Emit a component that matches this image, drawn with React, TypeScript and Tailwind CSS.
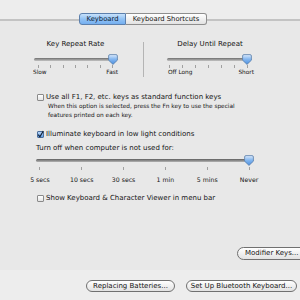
import React from "react";

function Thumb({ className }: { className: string }) {
  return (
    <svg width="10" height="11" viewBox="0 0 10 11" className={className}>
      <defs>
        <linearGradient id="thumbgrad" x1="0" y1="0" x2="0" y2="1">
          <stop offset="0" stopColor="#dceafb" />
          <stop offset="0.45" stopColor="#86b8f0" />
          <stop offset="1" stopColor="#4b8fe0" />
        </linearGradient>
      </defs>
      <path
        d="M0.6 2 Q0.6 0.6 2 0.6 H8 Q9.4 0.6 9.4 2 V6.2 L5 10.4 L0.6 6.2 Z"
        fill="url(#thumbgrad)"
        stroke="#5b7fa9"
        strokeWidth="0.8"
      />
    </svg>
  );
}

function Tick() {
  return <div className="w-px h-[3px] bg-[#a0a0a0]" />;
}

function Checkbox({ checked }: { checked?: boolean }) {
  if (checked) {
    return (
      <div className="w-[7px] h-[7px] shrink-0 rounded-[1px] border border-[#4c6f9c] bg-linear-to-b from-[#b9d6f7] to-[#5e9ee8] relative">
        <svg width="7" height="8" viewBox="0 0 7 8" className="absolute -top-[2px] -left-px">
          <path d="M1.2 4.6 L2.9 6.8 L6.3 1" fill="none" stroke="#132036" strokeWidth="1.2" />
        </svg>
      </div>
    );
  }
  return (
    <div className="w-[7px] h-[7px] shrink-0 rounded-[1px] border border-[#8a8a8a] bg-linear-to-b from-white to-[#e4e4e4]" />
  );
}

export default function App() {
  return (
    <div className="w-[300px] h-[300px] overflow-hidden bg-[#ededed] font-['DejaVu_Sans',sans-serif] text-[#141414] flex flex-col">
      <div className="h-[19px] shrink-0" />
      <div className="h-[251px] shrink-0 border-t-2 border-[#c3c3c3] bg-[#e8e8e8] flex flex-col">
        {/* Tabs */}
        <div className="-mt-[8px] ml-[79px] flex h-[12px] text-[6.8px] leading-none">
          <div className="w-[47px] h-full rounded-l-[3px] border border-[#5c80ad] bg-linear-to-b from-[#c8e2fb] via-[#92c2f4] to-[#74aff0] flex items-center justify-center text-[#0c1a30]">
            Keyboard
          </div>
          <div className="w-[81px] h-full rounded-r-[3px] border border-l-0 border-[#8e8e8e] bg-linear-to-b from-white to-[#e2e2e2] flex items-center justify-center">
            Keyboard Shortcuts
          </div>
        </div>

        {/* Sliders */}
        <div className="mt-[15px] flex h-[37px]">
          <div className="ml-[33px] w-[85px] flex flex-col">
            <div className="h-[9px] leading-[9px] text-[7px] text-center">Key Repeat Rate</div>
            <div className="mt-[4px] relative h-[12px]">
              <div className="mt-[5px] ml-[1px] w-[83px] h-[3px] rounded-full bg-linear-to-b from-[#6f6f6f] to-[#c4c4c4]" />
              <Thumb className="absolute top-[1px] left-[75px]" />
            </div>
            <div className="flex justify-between pl-[5px] pr-[5px]">
              {[0, 1, 2, 3, 4, 5, 6].map((i) => (
                <Tick key={i} />
              ))}
            </div>
            <div className="mt-px flex justify-between text-[5.8px] leading-[7px]">
              <span>Slow</span>
              <span>Fast</span>
            </div>
          </div>
          <div className="ml-[25px] mt-[2px] w-px h-[35px] bg-[#b4b4b4]" />
          <div className="ml-[22px] w-[88px] flex flex-col">
            <div className="h-[9px] leading-[9px] text-[7px] text-center">Delay Until Repeat</div>
            <div className="mt-[4px] relative h-[12px]">
              <div className="mt-[5px] ml-[1px] w-[84px] h-[3px] rounded-full bg-linear-to-b from-[#6f6f6f] to-[#c4c4c4]" />
              <Thumb className="absolute top-[1px] left-[76px]" />
            </div>
            <div className="flex justify-between pl-[3px] pr-[6px]">
              {[0, 1, 2, 3, 4, 5, 6].map((i) => (
                <Tick key={i} />
              ))}
            </div>
            <div className="mt-px flex justify-between pl-[2px] text-[5.8px] leading-[7px]">
              <span>Off Long</span>
              <span>Short</span>
            </div>
          </div>
        </div>

        {/* Checkbox 1 */}
        <div className="mt-[16px] ml-[37px] flex items-center gap-[2px] h-[9px] text-[7px] leading-[9px]">
          <Checkbox />
          <span>Use all F1, F2, etc. keys as standard function keys</span>
        </div>
        <div className="ml-[48px] text-[5.8px] leading-[9px]">
          <div>When this option is selected, press the Fn key to use the special</div>
          <div>features printed on each key.</div>
        </div>

        {/* Checkbox 2 */}
        <div className="mt-[10px] ml-[37px] flex items-center gap-[2px] h-[9px] text-[7px] leading-[9px]">
          <Checkbox checked />
          <span>Illuminate keyboard in low light conditions</span>
        </div>
        <div className="mt-[5px] ml-[36px] h-[9px] text-[7px] leading-[9px]">
          Turn off when computer is not used for:
        </div>

        {/* Slider 3 */}
        <div className="ml-[19px] w-[251px] flex flex-col">
          <div className="mt-px relative h-[12px]">
            <div className="mt-[5px] ml-[17px] w-[216px] h-[3px] rounded-full bg-linear-to-b from-[#5f5f5f] to-[#b4b4b4]" />
            <Thumb className="absolute top-[1px] left-[225px]" />
          </div>
          <div className="mt-px grid grid-cols-6">
            {[0, 1, 2, 3, 4, 5].map((i) => (
              <div key={i} className="flex justify-center">
                <Tick />
              </div>
            ))}
          </div>
          <div className="mt-[6px] grid grid-cols-6 text-[6.2px] leading-[7px] text-center">
            <span>5 secs</span>
            <span>10 secs</span>
            <span>30 secs</span>
            <span>1 min</span>
            <span>5 mins</span>
            <span>Never</span>
          </div>
        </div>

        {/* Checkbox 3 */}
        <div className="mt-[11px] ml-[37px] flex items-center gap-[2px] h-[9px] text-[7px] leading-[9px]">
          <Checkbox />
          <span>Show Keyboard &amp; Character Viewer in menu bar</span>
        </div>

        <div className="mt-[44px] ml-[237px] w-[72px] h-[13px] shrink-0 rounded-full border border-[#707070] bg-linear-to-b from-white to-[#e2e2e2] flex items-center pl-[7px] text-[7px] leading-none">
          Modifier Keys...
        </div>
      </div>

      <div className="mt-[10px] flex h-[12px] text-[7px] leading-none">
        <div className="ml-[86px] w-[89px] h-full rounded-full border border-[#707070] bg-linear-to-b from-white to-[#e2e2e2] flex items-center justify-center">
          Replacing Batteries...
        </div>
        <div className="ml-[11px] w-[111px] h-full rounded-full border border-[#707070] bg-linear-to-b from-white to-[#e2e2e2] flex items-center justify-center">
          Set Up Bluetooth Keyboard...
        </div>
      </div>
    </div>
  );
}
